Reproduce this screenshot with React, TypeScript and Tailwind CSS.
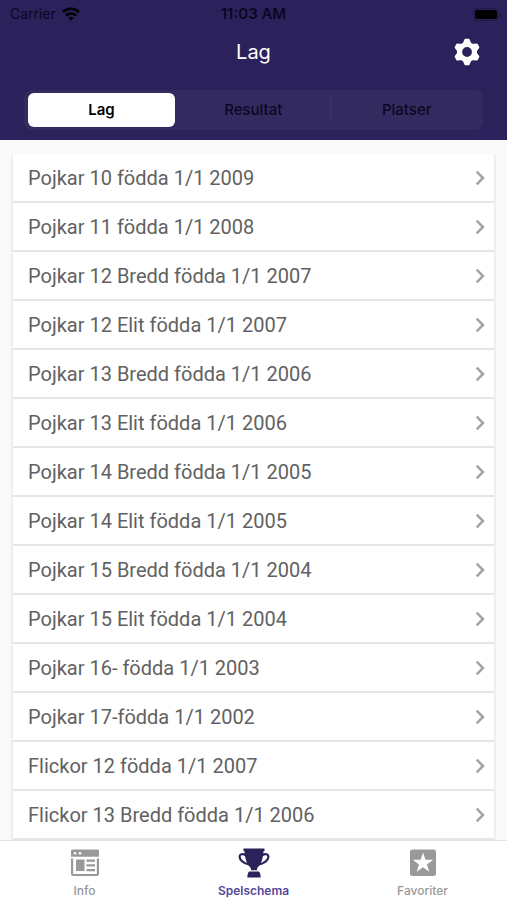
import clsx from 'clsx';

const segments = ['Lag', 'Resultat', 'Platser'];

const teams = [
  'Pojkar 10 födda 1/1 2009',
  'Pojkar 11 födda 1/1 2008',
  'Pojkar 12 Bredd födda 1/1 2007',
  'Pojkar 12 Elit födda 1/1 2007',
  'Pojkar 13 Bredd födda 1/1 2006',
  'Pojkar 13 Elit födda 1/1 2006',
  'Pojkar 14 Bredd födda 1/1 2005',
  'Pojkar 14 Elit födda 1/1 2005',
  'Pojkar 15 Bredd födda 1/1 2004',
  'Pojkar 15 Elit födda 1/1 2004',
  'Pojkar 16- födda 1/1 2003',
  'Pojkar 17-födda 1/1 2002',
  'Flickor 12 födda 1/1 2007',
  'Flickor 13 Bredd födda 1/1 2006',
];

const tabs = [
  { label: 'Info', icon: InfoIcon, active: false },
  { label: 'Spelschema', icon: TrophyIcon, active: true },
  { label: 'Favoriter', icon: StarIcon, active: false },
];

function WifiIcon() {
  return (
    <svg viewBox="0 0 18 14" className="w-[18px] h-3.5" fill="none" stroke="#000" strokeWidth="2.7" aria-hidden="true">
      <path d="M1 5a11.500 11.500 0 0 1 16 0" />
      <path d="M4 8.500a7.200 7.200 0 0 1 10 0" />
      <path d="M9 13.600 6.300 11a4 4 0 0 1 5.400 0z" fill="#000" stroke="none" />
    </svg>
  );
}

function BatteryIcon() {
  return (
    <svg viewBox="0 0 30 13" className="w-[30px] h-[13px]" aria-hidden="true">
      <rect x="0.5" y="0.5" width="25" height="12" rx="3.5" fill="none" stroke="#221a4d" />
      <rect x="2" y="2" width="22" height="9" rx="2" fill="#000" />
      <path d="M27 4.500c1.600.3 1.600 3.700 0 4z" fill="#1d1745" />
    </svg>
  );
}

function GearIcon() {
  return (
    <svg viewBox="0 0 28 28" className="w-7 h-7" aria-hidden="true">
      <circle cx="14" cy="14" r="7.500" fill="none" stroke="currentColor" strokeWidth="5.200" />
      {[0, 60, 120, 180, 240, 300].map((angle) => (
        <path key={angle} fill="currentColor" transform={`rotate(${angle} 14 14)`} d="M9.500 6 11.300 1.700Q11.600.8 12.500.8h3q.9 0 1.200.9L18.500 6z" />
      ))}
    </svg>
  );
}

function ChevronIcon() {
  return (
    <svg viewBox="0 0 10 16" className="w-2.5 h-4 shrink-0" fill="none" stroke="#a3a3a3" strokeWidth="2.5" aria-hidden="true">
      <path d="M1.700 1.600 8 8l-6.300 6.400" />
    </svg>
  );
}

function InfoIcon() {
  return (
    <svg viewBox="0 0 30 28" className="w-[30px] h-7" aria-hidden="true">
      <path fill="currentColor" d="M2.500.5h25a1.500 1.500 0 0 1 1.500 1.500v5.800H1V2A1.500 1.500 0 0 1 2.500.5z" />
      <path fill="none" stroke="currentColor" strokeWidth="2.200" d="M2.100 9.500V25a1 1 0 0 0 1 1h23.800a1 1 0 0 0 1-1V9.500" />
      <path fill="currentColor" d="M6 10.500h8.500v11.500H6zM16.500 10.500H25v2.200h-8.500zM16.500 15.200H25v2.200h-8.500zM16.500 20H25v2.200h-8.500z" />
      <circle cx="5" cy="4.200" r="1.300" fill="#fff" />
      <circle cx="10" cy="4.200" r="1.300" fill="#fff" />
    </svg>
  );
}

function TrophyIcon() {
  return (
    <svg viewBox="0 0 32 30" className="w-8 h-[30px]" aria-hidden="true">
      <path fill="currentColor" d="M5.500.5h21v2.700h-1C25 10.500 23.500 15.500 20 19c-.8.900-1 2-1 3.200h-6c0-1.200-.2-2.300-1-3.200C8.500 15.500 7 10.500 6.500 3.200h-1z" />
      <path fill="none" stroke="currentColor" strokeWidth="2.200" d="M7.500 7C4.500 5.300 1.500 6.200 1.600 9c.1 3.300 4.500 6.300 9.400 7.500M24.500 7c3-1.700 6-.8 5.900 2-.1 3.300-4.500 6.300-9.400 7.500" />
      <path fill="currentColor" d="M11 23.600h10c1 1.200 1.500 2.800 1.700 5.900H9.300c.2-3.100.7-4.700 1.700-5.900z" />
    </svg>
  );
}

function StarIcon() {
  return (
    <svg viewBox="0 0 28 28" className="w-7 h-7" aria-hidden="true">
      <rect x="1" y="0.500" width="26" height="26.500" rx="2.500" fill="currentColor" />
      <path fill="#fff" d="m14 3.500 2.500 7.300h7.700l-6.200 4.600 2.300 7.400-6.300-4.500-6.300 4.500 2.300-7.400-6.200-4.600h7.700z" />
    </svg>
  );
}

function StatusBar() {
  return (
    <div className="grid grid-cols-3 items-center h-7 px-1 text-[#0b0720]">
      <div className="flex items-center gap-1.5 pl-1.5">
        <span className="text-sm">Carrier</span>
        <WifiIcon />
      </div>
      <span className="text-center text-[15px] font-semibold">11:03 AM</span>
      <div className="flex justify-end">
        <BatteryIcon />
      </div>
    </div>
  );
}

export default function App() {
  return (
    <div className="flex flex-col h-screen overflow-hidden bg-[#fafafa] font-['Inter','Liberation_Sans',sans-serif]">
      <header className="shrink-0 h-[140px] bg-[#2b215b]">
        <StatusBar />
        <div className="grid grid-cols-3 items-center h-12 px-[26px]">
          <h1 className="col-start-2 text-center text-xl text-white">Lag</h1>
          <button type="button" aria-label="Inställningar" className="justify-self-end text-white">
            <GearIcon />
          </button>
        </div>
        <div className="flex items-center mx-6 mt-3.5 h-10 pl-1 rounded-lg bg-[#332b60]">
          {segments.map((segment, i) => (
            <button
              key={segment}
              type="button"
              aria-pressed={i === 0}
              className={clsx(
                'text-[15px]',
                i === 0 && 'w-[147px] h-[34px] rounded-md bg-white font-semibold text-black',
                i === 1 && 'flex-1 h-7 ml-0.5 border-r border-[#3d356a] font-medium text-[#0b0720]',
                i === 2 && 'flex-1 h-7 font-medium text-[#0b0720]',
              )}
            >
              {segment}
            </button>
          ))}
        </div>
      </header>

      <main className="flex-1 min-h-0 overflow-hidden px-3 pt-3.5">
        <ul className="bg-white border-x border-[#ececec] rounded-t-xs shadow-sm font-['Roboto',sans-serif]">
          {teams.map((team) => (
            <li key={team} className="border-b-2 border-[#e6e6e6]">
              <a href="#" className="flex items-center justify-between h-[47px] pl-[15px] pr-[9px] text-xl text-[#616161]">
                {team}
                <ChevronIcon />
              </a>
            </li>
          ))}
        </ul>
      </main>

      <nav className="grid grid-cols-3 shrink-0 h-[60px] border-t border-[#e2e2e2] bg-white">
        {tabs.map(({ label, icon: Icon, active }) => (
          <a
            key={label}
            href="#"
            className={clsx('flex flex-col items-center pt-[7px]', active ? 'text-[#2b215b]' : 'text-[#999999]')}
          >
            <span className="flex items-center h-[30px]">
              <Icon />
            </span>
            <span className={clsx('mt-1 text-xs leading-[18px]', active ? 'font-semibold text-[#54489a]' : 'font-medium')}>{label}</span>
          </a>
        ))}
      </nav>
    </div>
  );
}
